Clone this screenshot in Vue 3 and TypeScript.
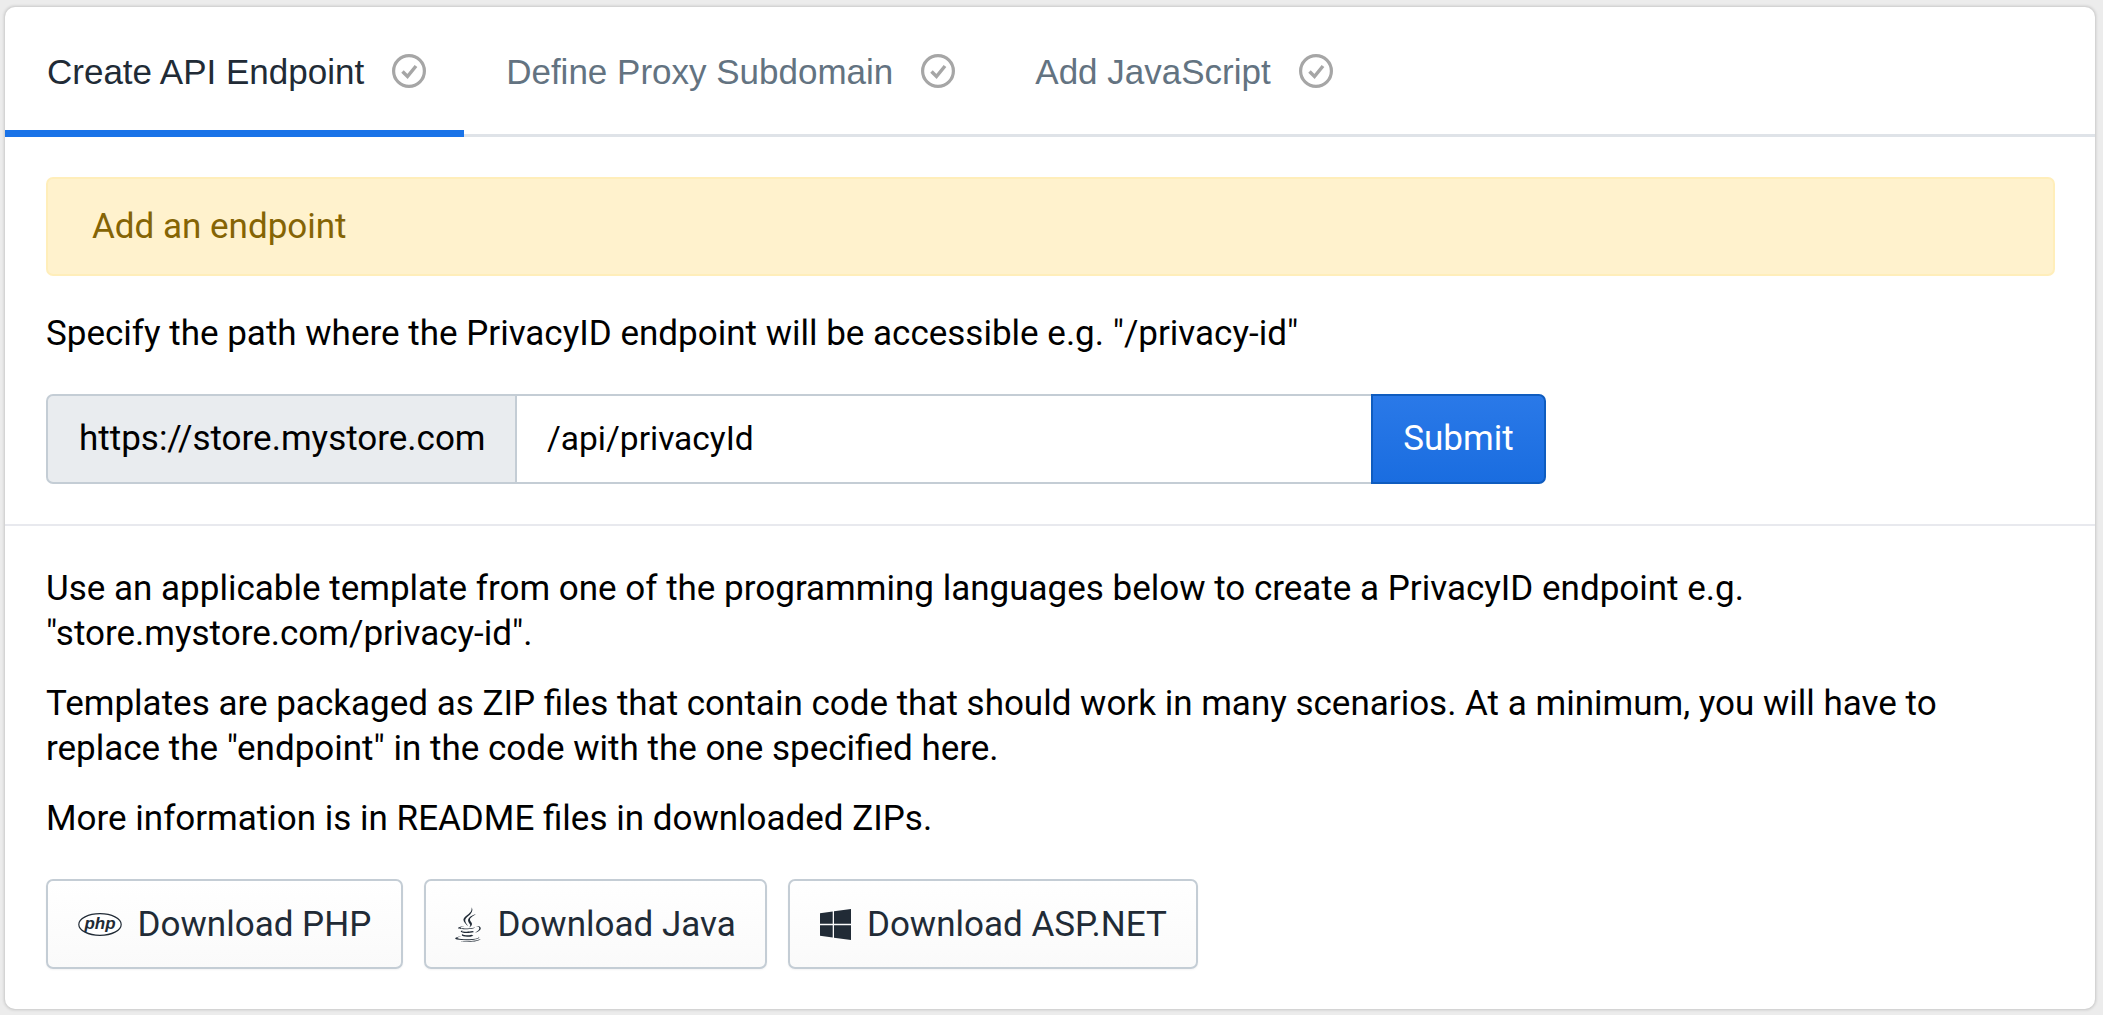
<script setup lang="ts">
const tabs: { label: string; active: boolean }[] = [
  { label: 'Create API Endpoint', active: true },
  { label: 'Define Proxy Subdomain', active: false },
  { label: 'Add JavaScript', active: false },
]
</script>

<template>
  <main class="page">
    <section class="card">
      <nav class="tabs">
        <a v-for="tab in tabs" :key="tab.label" class="tab" :class="{ active: tab.active }">
          <span>{{ tab.label }}</span>
          <svg class="check" viewBox="0 0 34 34" aria-hidden="true">
            <ellipse cx="17" cy="17" rx="15.4" ry="15.4" fill="none" stroke="#a6a6a6" stroke-width="3.2" />
            <path d="M10.5 17.5l5 5 8.5-10.5" fill="none" stroke="#a6a6a6" stroke-width="3.5" />
          </svg>
        </a>
      </nav>

      <div class="section top">
        <div class="alert">Add an endpoint</div>
        <p class="lead">Specify the path where the PrivacyID endpoint will be accessible e.g. "/privacy-id"</p>
        <form class="group" @submit.prevent>
          <span class="prefix">https://store.mystore.com</span>
          <input class="path" type="text" value="/api/privacyId" />
          <button class="submit" type="submit">Submit</button>
        </form>
      </div>

      <div class="section bottom">
        <p>Use an applicable template from one of the programming languages below to create a PrivacyID endpoint e.g. "store.mystore.com/privacy-id".</p>
        <p>Templates are packaged as ZIP files that contain code that should work in many scenarios. At a minimum, you will have to replace the "endpoint" in the code with the one specified here.</p>
        <p>More information is in README files in downloaded ZIPs.</p>
        <div class="downloads">
          <button class="dl" type="button">
            <svg class="ico-php" viewBox="0 0 44 23" aria-hidden="true">
              <ellipse cx="22" cy="11.5" rx="21.2" ry="10.8" fill="#fff" stroke="#212b36" stroke-width="1.2" />
              <text x="22" y="16" text-anchor="middle" class="php-text">php</text>
            </svg>
            <span>Download PHP</span>
          </button>
          <button class="dl" type="button">
            <svg class="ico-java" viewBox="0 0 384 512" aria-hidden="true">
              <path d="M277.74 312.9c9.8-6.7 23.4-12.5 23.4-12.5s-38.7 7-77.2 10.2c-47.1 3.9-97.7 4.7-123.1 1.3-60.1-8 33-30.1 33-30.1s-36.1-2.4-80.6 19c-52.5 25.4 130 37 224.5 12.1zm-85.4-32.1c-19-42.7-83.1-80.2 0-145.8C296 53.2 242.84 0 242.84 0c21.5 84.5-75.6 110.1-110.7 162.6-23.9 35.9 11.7 74.4 60.2 118.2zm114.6-176.2c.1 0-175.2 43.8-91.5 140.2 24.7 28.4-6.5 54-6.5 54s62.7-32.4 33.9-72.9c-26.9-37.8-47.5-56.6 64.1-121.3zm-6.1 270.5a12.19 12.19 0 0 1-2 2.6c128.3-33.7 81.1-118.9 19.8-97.3a17.33 17.33 0 0 0-8.2 6.3 70.45 70.45 0 0 1 11-3c31-6.5 75.5 41.5-20.6 91.4zM348 437.4s14.5 11.9-15.9 21.2c-57.9 17.5-240.8 22.8-291.6.7-18.3-7.9 16-19 26.8-21.3 11.2-2.4 17.7-2 17.7-2-20.3-14.3-131.3 28.1-56.4 40.2C232.84 509.4 401 461.3 348 437.4zM124.44 396c-78.7 22 47.9 67.4 148.1 24.5a185.89 185.89 0 0 1-28.2-13.8c-44.7 8.5-65.4 9.1-106 4.5-33.5-3.8-13.9-15.2-13.9-15.2zm179.8 97.2c-78.7 14.8-175.8 13.1-233.3 3.6 0-.1 11.8 9.7 72.4 13.6 92.2 5.9 233.8-3.3 237.1-46.9 0 0-6.4 16.5-76.2 29.7zM260.64 353c-59.2 11.4-93.5 11.1-136.8 6.6-33.5-3.5-11.6-19.7-11.6-19.7-86.8 28.8 48.2 61.4 169.5 25.9a60.37 60.37 0 0 1-21.1-12.8z" />
            </svg>
            <span>Download Java</span>
          </button>
          <button class="dl" type="button">
            <svg class="ico-win" viewBox="0 32 448 448" aria-hidden="true">
              <path d="M0 93.7l183.6-25.3v177.4H0V93.7zm0 324.6l183.6 25.3V268.4H0v149.9zm202.2 28L448 480V268.4H202.2v177.9zm0-380.6v180.1H448V32L202.2 65.7z" />
            </svg>
            <span>Download ASP.NET</span>
          </button>
        </div>
      </div>
    </section>
  </main>
</template>

<style>
html,
body {
  margin: 0;
  background: #ececec;
}
</style>

<style scoped>
.page {
  box-sizing: border-box;
  height: 1015px;
  padding: 7px 8px 6px 5px;
  font-family: Roboto, "Liberation Sans", sans-serif;
  font-size: 35px;
  line-height: 45px;
  color: #000;
}

.card {
  box-sizing: border-box;
  height: 1002px;
  background: #fff;
  border-radius: 10px;
  box-shadow: 0 0 3px 1px rgba(0, 0, 0, 0.16);
  overflow: hidden;
}

.tabs {
  display: flex;
  height: 130px;
  box-sizing: border-box;
  border-bottom: 3px solid #dfe3e8;
}

.tab {
  display: flex;
  align-items: center;
  gap: 28px;
  height: 130px;
  flex: none;
  box-sizing: border-box;
  padding: 0 38px 2px 42px;
  font-family: "Liberation Sans", Arial, sans-serif;
  font-size: 35px;
  color: #637381;
}

.tab.active {
  color: #212b36;
  box-shadow: inset 0 -7px 0 #1a73e8;
}

.check {
  width: 34px;
  height: 34px;
  flex: none;
}

.section {
  padding: 0 40px 0 41px;
}

.top {
  padding-top: 40px;
  padding-bottom: 40px;
  border-bottom: 2px solid #e8e9ee;
}

.alert {
  box-sizing: border-box;
  height: 99px;
  padding: 0 44px;
  display: flex;
  align-items: center;
  background: #fff2cd;
  border: 2px solid #ffeeba;
  border-radius: 7px;
  color: #856404;
}

p {
  margin: 0 0 25px;
}

.lead {
  margin: 34.5px 0 38.5px;
}

.group {
  display: flex;
  width: 1500px;
  height: 90px;
}

.prefix,
.path,
.submit {
  box-sizing: border-box;
  height: 90px;
  font: inherit;
  line-height: 42px;
}

.prefix {
  display: flex;
  align-items: center;
  width: 471px;
  padding: 0 31px 1px;
  background: #e9ecef;
  border: 2px solid #c4cdd5;
  border-radius: 7px 0 0 7px;
  color: #000;
}

.path {
  flex: 1;
  min-width: 0;
  padding: 0 30px 1px;
  border: 2px solid #c4cdd5;
  border-left: 0;
  border-right: 0;
  border-radius: 0;
  font-size: 33.5px;
  color: #000;
  background: #fff;
  outline: none;
}

.submit {
  width: 175px;
  padding: 0 0 1px;
  border: 2px solid #0f5cbf;
  border-radius: 0 7px 7px 0;
  background: linear-gradient(#2a79e8, #1a6de0);
  color: #fff;
}

.bottom {
  padding-top: 40px;
}

.downloads {
  display: flex;
  gap: 21px;
  margin-top: 38px;
}

.dl {
  display: flex;
  align-items: center;
  gap: 16px;
  box-sizing: border-box;
  height: 90px;
  padding: 0 29.6px;
  font: inherit;
  color: #212b36;
  background: linear-gradient(#fff, #fafafa);
  border: 2px solid #c4cdd5;
  border-radius: 7px;
  box-shadow: 0 1px 2px rgba(22, 29, 37, 0.05);
}

.ico-php {
  width: 44px;
  height: 23px;
  flex: none;
}

.php-text {
  font-family: "Liberation Sans", sans-serif;
  font-size: 17px;
  font-weight: 700;
  font-style: italic;
  fill: #212b36;
}

.ico-java {
  width: 26px;
  height: 35px;
  flex: none;
  fill: #212b36;
}

.ico-win {
  width: 31px;
  height: 31px;
  flex: none;
  fill: #212b36;
}
</style>
